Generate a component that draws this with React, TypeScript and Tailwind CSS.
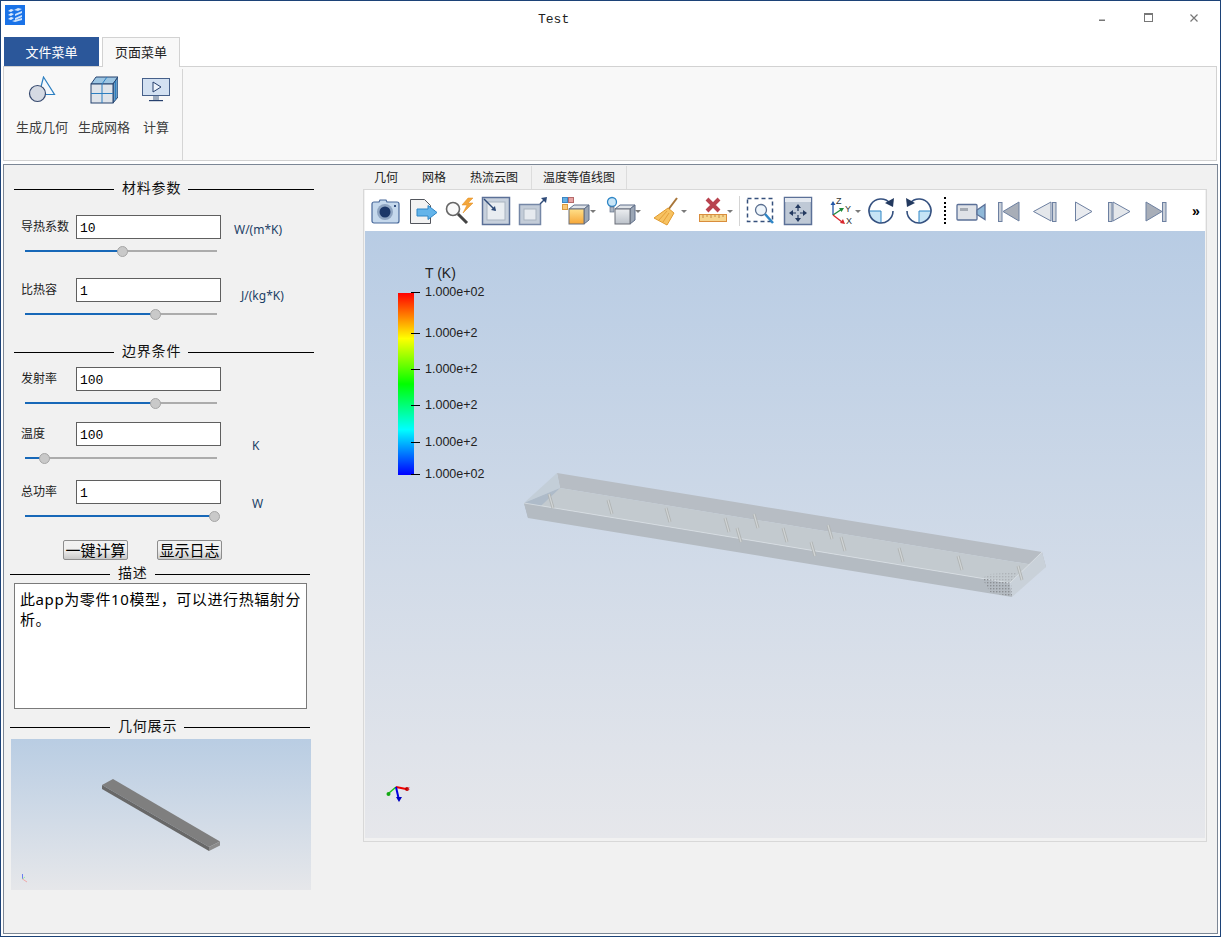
import React from "react";

const stroke = "#5b7097";

const Caret = ({ x = 32 }: { x?: number }) => (
  <polygon points={`${x - 3},14 ${x + 3},14 ${x},17`} fill="#7a7a7a" />
);

const Svg = ({ w, className, children }: { w: number; className?: string; children: React.ReactNode }) => (
  <svg width={w} height={30} viewBox={`0 0 ${w} 30`} className={`shrink-0 ${className ?? ""}`}>
    {children}
  </svg>
);

const CubeFaces = ({ id, from, to }: { id: string; from: string; to: string }) => (
  <>
    <defs>
      <linearGradient id={id} x1="0" y1="0" x2="0" y2="1">
        <stop offset="0" stopColor={from} />
        <stop offset="1" stopColor={to} />
      </linearGradient>
    </defs>
    <polygon points="9,13 14,9 29,9 24,13" fill="#dfe3e8" stroke="#5f6f8a" />
    <polygon points="24,13 29,9 29,24 24,28" fill="#9ba6b5" stroke="#5f6f8a" />
    <rect x="9" y="13" width="15" height="15" fill={`url(#${id})`} stroke="#6b6f78" />
  </>
);

const toolbarItems: React.ReactNode[] = [
  <Svg key="camera" w={30} className="ml-[6px]">
    <path d="M5 6h3l1-2h6l1 2h10a2 2 0 0 1 2 2v17a2 2 0 0 1-2 2H3a2 2 0 0 1-2-2V8a2 2 0 0 1 2-2z" fill="#c5d8ec" stroke="#48689a" strokeWidth="1.2" />
    <circle cx="14" cy="16" r="8" fill="#8fa5c2" />
    <circle cx="14" cy="16" r="5.5" fill="#1c3768" />
    <rect x="23" y="9" width="2" height="2" fill="#34507f" />
  </Svg>,
  <Svg key="save" w={30} className="ml-[8px]">
    <path d="M1.5 3.5h14l6 6v18h-20z" fill="#f2f2f2" stroke="#52555c" />
    <path d="M8 13h11V9.5l9 7-9 7V20H8z" fill="#63b4ea" stroke="#2f86c6" />
  </Svg>,
  <Svg key="search" w={30} className="ml-[6px]">
    <circle cx="8" cy="13" r="6.5" fill="#fafafa" stroke="#666" strokeWidth="1.6" />
    <line x1="13" y1="18" x2="22" y2="27" stroke="#444" strokeWidth="3" />
    <polygon points="23,2 17,9 22,9 18,17 28,7 23,7 28,2" fill="#f3a63b" stroke="#e08a1e" strokeWidth="0.5" />
  </Svg>,
  <Svg key="zoomin" w={30} className="ml-[6px]">
    <rect x="1.5" y="1.5" width="27" height="27" fill="#c7d0dc" stroke={stroke} strokeWidth="1.5" />
    <rect x="6" y="6" width="18" height="18" fill="#e9edf1" stroke="#a9b3c0" />
    <line x1="3" y1="3" x2="14" y2="14" stroke="#2e4a78" strokeWidth="1.4" />
    <polygon points="15,15 10,14 14,10" fill="#2e4a78" />
  </Svg>,
  <Svg key="zoomout" w={30} className="ml-[7px]">
    <rect x="1.5" y="8.5" width="21" height="20" fill="#c3ccd8" stroke="#7587a6" strokeWidth="1.5" />
    <rect x="6" y="13" width="12" height="11" fill="#e6eaef" stroke="#a9b3c0" />
    <line x1="22" y1="8" x2="27" y2="3" stroke="#2e4a78" strokeWidth="1.4" />
    <polygon points="29,1 23,2 28,7" fill="#2e4a78" />
  </Svg>,
  <Svg key="cube" w={38} className="ml-[12px]">
    <rect x="2.5" y="1.5" width="5" height="5" fill="#62aee5" stroke="#3d86c2" />
    <rect x="8.5" y="1.5" width="5" height="5" fill="#e7a3a3" stroke="#b56a6a" />
    <rect x="2.5" y="8.5" width="5" height="5" fill="#f8c778" stroke="#d8993e" />
    <CubeFaces id="cube-front" from="#ffe08a" to="#f6a637" />
    <Caret x={33} />
  </Svg>,
  <Svg key="bulb" w={38} className="ml-[8px]">
    <circle cx="6" cy="6" r="4.5" fill="#c9e6f8" stroke="#2f86c6" strokeWidth="1.3" />
    <rect x="4" y="11" width="4" height="5" fill="#a9b3c0" stroke="#66738a" strokeWidth="0.7" />
    <CubeFaces id="bulb-front" from="#eceef1" to="#bcc2ca" />
    <Caret />
  </Svg>,
  <Svg key="broom" w={38} className="ml-[8px]">
    <line x1="25" y1="2" x2="16" y2="14" stroke="#a8763a" strokeWidth="2" />
    <polygon points="16,12 2,22 15,29 22,17" fill="#f7c261" stroke="#e09a2f" />
    <path d="M7 24l8-9M11 26l6-9" stroke="#dd9530" strokeWidth="0.8" />
    <Caret />
  </Svg>,
  <Svg key="ruler" w={38} className="ml-[8px]">
    <path d="M9 3l12 12M21 3L9 15" stroke="#b8434f" strokeWidth="4" />
    <rect x="1.5" y="18.5" width="27" height="7" fill="#f6d68e" stroke="#d98d3c" />
    <path d="M5 19v3M9 19v2M13 19v3M17 19v2M21 19v3M25 19v2" stroke="#b97a35" strokeWidth="0.8" />
    <Caret />
  </Svg>,
  <div key="sep" className="ml-[3px] w-px h-[30px] bg-[#d4d4d4] shrink-0" />,
  <Svg key="dash" w={30} className="ml-[6px]">
    <rect x="1.5" y="2.5" width="25" height="23" fill="none" stroke="#36507c" strokeWidth="1.5" strokeDasharray="4 3" />
    <circle cx="15" cy="14" r="5.5" fill="#eef5fb" stroke="#5a6f90" strokeWidth="1.3" />
    <line x1="19" y1="18" x2="27" y2="27" stroke="#2f86c6" strokeWidth="2.5" />
  </Svg>,
  <Svg key="fit" w={30} className="ml-[7px]">
    <rect x="1.5" y="1.5" width="27" height="27" fill="#bfc9d6" stroke={stroke} strokeWidth="1.5" />
    <rect x="2" y="2" width="26" height="4" fill="#e3e8ef" />
    <path d="M15 12v3M15 19v3M10 17h3M17 17h3" stroke="#23395f" strokeWidth="1.2" />
    <polygon points="15,8 12,12 18,12" fill="#23395f" />
    <polygon points="15,26 12,22 18,22" fill="#23395f" />
    <polygon points="6,17 10,14 10,20" fill="#23395f" />
    <polygon points="24,17 20,14 20,20" fill="#23395f" />
  </Svg>,
  <Svg key="axes" w={34} className="ml-[16px]">
    <line x1="4" y1="19" x2="4" y2="8" stroke="#2457a8" strokeWidth="1.3" />
    <polygon points="4,5 1.5,9 6.5,9" fill="#2457a8" />
    <line x1="4" y1="19" x2="13" y2="13" stroke="#1d8a3a" strokeWidth="1.3" />
    <polygon points="15,12 10,12 12.5,16" fill="#1d8a3a" />
    <line x1="4" y1="19" x2="13" y2="26" stroke="#d8262c" strokeWidth="1.3" />
    <polygon points="16,28 11,27 14,23" fill="#d8262c" />
    <text x="7" y="8" fontSize="9" fill="#333" fontFamily="Liberation Sans">Z</text>
    <text x="16" y="16" fontSize="9" fill="#333" fontFamily="Liberation Sans">Y</text>
    <text x="17" y="28" fontSize="9" fill="#333" fontFamily="Liberation Sans">X</text>
    <Caret x={29} />
  </Svg>,
  <Svg key="cw" w={30} className="ml-[3px]">
    <path d="M3 15h12v12a12 12 0 0 1-12-12z" fill="#c6e4f6" />
    <path d="M3 15h12v12" fill="none" stroke="#2f86c6" />
    <path d="M24 7A12 12 0 1 0 27 15" fill="none" stroke="#34507f" strokeWidth="1.6" />
    <polygon points="28,2 27,11 19,7" fill="#23395f" />
  </Svg>,
  <Svg key="ccw" w={30} className="ml-[8px]">
    <path d="M27 15H15v12a12 12 0 0 0 12-12z" fill="#c6e4f6" />
    <path d="M27 15H15v12" fill="none" stroke="#2f86c6" />
    <path d="M6 7A12 12 0 1 1 3 15" fill="none" stroke="#34507f" strokeWidth="1.6" />
    <polygon points="2,2 3,11 11,7" fill="#23395f" />
  </Svg>,
  <div key="dots" className="ml-[10px] h-[27px] border-l-2 border-dotted border-black shrink-0 w-[2px]" />,
  <Svg key="video" w={32} className="ml-[9px]">
    <rect x="2" y="8.5" width="20" height="15.5" rx="1" fill="#dfe2e7" stroke={stroke} strokeWidth="1.3" />
    <rect x="5" y="12" width="8" height="3" fill="#a4aab3" />
    <polygon points="22,14 30,8.5 30,23.5 22,18.5" fill="#8fb8d8" stroke={stroke} strokeWidth="1.3" />
  </Svg>,
  <Svg key="first" w={24} className="ml-[9px]">
    <rect x="2.5" y="6.5" width="3.5" height="19" fill="#c8ced7" stroke="#6d80a1" />
    <polygon points="7,15.5 23,6 23,25" fill="#a8aeb8" stroke="#6d80a1" />
  </Svg>,
  <Svg key="prev" w={26} className="ml-[12px]">
    <polygon points="1.5,15.5 19,6 19,25" fill="#e4e7eb" stroke="#6d80a1" />
    <rect x="20.5" y="6.5" width="3.5" height="19" fill="#d0d5dc" stroke="#6d80a1" />
  </Svg>,
  <Svg key="play" w={20} className="ml-[15px]">
    <polygon points="2.5,6 19,15.5 2.5,25" fill="#e9ebef" stroke="#6d80a1" />
  </Svg>,
  <Svg key="next" w={26} className="ml-[13px]">
    <rect x="2.5" y="6.5" width="3.5" height="19" fill="#d0d5dc" stroke="#6d80a1" />
    <polygon points="7,6 24,15.5 7,25" fill="#e4e7eb" stroke="#6d80a1" />
  </Svg>,
  <Svg key="last" w={24} className="ml-[12px]">
    <polygon points="2,6 18,15.5 2,25" fill="#a8aeb8" stroke="#6d80a1" />
    <rect x="18.5" y="6.5" width="3.5" height="19" fill="#c8ced7" stroke="#6d80a1" />
  </Svg>,
  <span key="more" className="ml-[24px] text-[14px] leading-none font-bold text-black font-['Liberation_Sans',sans-serif]">»</span>,
];

const SectionTitle = ({ title, className }: { title: string; className: string }) => (
  <div className={`flex items-center h-4 w-[300px] ${className}`}>
    <div className="w-[100px] h-px bg-black" />
    <span className="pl-2 pr-[7px] mb-[3px] text-[14px] leading-[15px] tracking-[0.8px] text-[#111]">{title}</span>
    <div className="flex-1 h-px bg-black" />
  </div>
);

const Slider = ({ value }: { value: number }) => (
  <div className="ml-[21px] mt-[5px] w-[192px] h-[14px] flex items-center">
    <div className="h-[2px] bg-[#1768b8]" style={{ width: value }} />
    <div className="relative shrink-0 w-[11px] h-[11px] -mx-[5px] rounded-full bg-[#c9c9c9] border border-[#a6a6a6]" />
    <div className="flex-1 h-[2px] bg-[#acacac]" />
  </div>
);

type ParamProps = {
  label: string;
  value: string;
  slider: number;
  unit?: string;
  unitClass?: string;
  className: string;
};

const Param = ({ label, value, slider, unit, unitClass, className }: ParamProps) => (
  <div className={className}>
    <div className="flex h-6 ml-[17px]">
      <span className="w-[55px] text-[12px] leading-6 text-[#222]">{label}</span>
      <input
        readOnly
        value={value}
        className="w-[145px] h-6 pl-[3px] pt-0.5 bg-white border border-[#5f5f5f] text-[13px] text-black font-['Liberation_Mono',monospace] outline-none"
      />
      {unit && <span className={`text-[12px] leading-4 text-[#1c3f66] ${unitClass}`}>{unit}</span>}
    </div>
    <Slider value={slider} />
  </div>
);

const Button = ({ label, className }: { label: string; className?: string }) => (
  <button className={`w-[65px] h-5 border border-[#8d8d8d] rounded-[2px] bg-linear-to-b from-[#f2f2f2] via-[#efefef] to-[#c9c9c9] text-[15px] leading-[18px] text-black ${className ?? ""}`}>
    {label}
  </button>
);

const LeftPanel = () => (
  <div className="w-[359px] shrink-0 pt-4">
    <SectionTitle title="材料参数" className="ml-[10px]" />
    <Param className="mt-[18px]" label="导热系数" value="10" slider={97} unit="W/(m*K)" unitClass="ml-[13px] mt-[7px]" />
    <Param className="mt-5" label="比热容" value="1" slider={130} unit="J/(kg*K)" unitClass="ml-5 mt-[10px]" />
    <SectionTitle title="边界条件" className="ml-[10px] mt-[23px]" />
    <Param className="mt-[7px]" label="发射率" value="100" slider={130} />
    <Param className="mt-3" label="温度" value="100" slider={19} unit="K" unitClass="ml-[31px] mt-4" />
    <Param className="mt-[15px]" label="总功率" value="1" slider={189} unit="W" unitClass="ml-[31px] mt-4" />
    <div className="flex ml-[59px] mt-[17px] gap-[29px]">
      <Button label="一键计算" />
      <Button label="显示日志" />
    </div>
    <SectionTitle title="描述" className="ml-1.5 mt-1.5" />
    <div className="ml-2.5 mt-px w-[293px] h-[126px] bg-white border border-[#7a7a7a] pl-[5px] pr-1 pt-[5px] text-[15px] leading-[20px] tracking-[0.6px] text-black">
      此app为零件10模型，可以进行热辐射分析。
    </div>
    <SectionTitle title="几何展示" className="ml-1.5 mt-2.5" />
    <div className="ml-[7px] mt-1 w-[300px] h-[151px] bg-linear-to-b from-[#b9cde3] to-[#e6e7ea]">
      <svg viewBox="11 739 300 151" className="block w-full h-full">
        <polygon points="113,779 102,785 209,847 220,841.5" fill="#7f7f7f" />
        <polygon points="102,785 209,847 209,851 102,789" fill="#686868" />
        <polygon points="209,847 220,841.5 220,845.5 209,851" fill="#8c8c8c" />
        <line x1="22.5" y1="874" x2="22.5" y2="879" stroke="#6a7ff0" />
        <line x1="22.5" y1="879" x2="25" y2="877" stroke="#9ee8a8" />
        <line x1="22.5" y1="879" x2="27" y2="882" stroke="#f0a8a8" />
      </svg>
    </div>
  </div>
);

const ticks = [
  { label: "1.000e+02", top: "top-[53px]" },
  { label: "1.000e+2", top: "top-[94px]" },
  { label: "1.000e+2", top: "top-[130px]" },
  { label: "1.000e+2", top: "top-[166px]" },
  { label: "1.000e+2", top: "top-[203px]" },
  { label: "1.000e+02", top: "top-[235px]" },
];

const pins = [
  [551, 501], [610, 507], [668, 515], [727, 525], [739, 535], [756, 521], [785, 535],
  [813, 549], [830, 532], [843, 544], [901, 555], [960, 563], [1020, 573],
];

const Viewer = () => (
  <div className="relative h-[607px] bg-linear-to-b from-[#b8cce4] to-[#e6e7eb] font-['Liberation_Sans',sans-serif]">
    <svg viewBox="365 231 840 607" className="absolute inset-0 w-full h-full">
      <defs>
        <pattern id="hatch" width="3" height="3" patternUnits="userSpaceOnUse">
          <rect width="1.4" height="1.4" fill="#8b8f94" />
        </pattern>
      </defs>
      <polygon points="557,473 1042,552 1046,567 560,488" fill="#b7bdc4" />
      <polygon points="560,488 1046,567 1010,583 524,503" fill="#c3cacf" />
      <polygon points="557,473 560,488 524,503" fill="#c3ced8" />
      <polygon points="524,503 560,488 528,518" fill="#aebbc9" />
      <polygon points="524,503 1010,583 1012,597 528,518" fill="#b4bbc2" />
      <polygon points="1042,552 1046,567 1012,597 1010,583" fill="#c9d1d9" />
      <line x1="524" y1="503" x2="1010" y2="583" stroke="#e6ebee" strokeOpacity="0.6" />
      <line x1="1010" y1="583" x2="1042" y2="552" stroke="#e6ebee" strokeOpacity="0.6" />
      <polygon points="982,578 1011,583 1012,597 990,592" fill="url(#hatch)" />
      <polygon points="990,574 1018,572 1010,583 982,578" fill="url(#hatch)" opacity="0.4" />
      {pins.map(([x, y]) => (
        <g key={x}>
          <line x1={x - 2} y1={y - 7} x2={x + 2} y2={y + 7} stroke="#b0b4b4" strokeWidth="3" />
          <line x1={x - 2} y1={y - 7} x2={x + 2} y2={y + 7} stroke="#d0d4d5" strokeWidth="1.2" />
        </g>
      ))}
      <line x1="396" y1="787" x2="406" y2="789" stroke="#f00000" strokeWidth="2" />
      <circle cx="407" cy="789" r="2" fill="#c00000" />
      <line x1="396" y1="787" x2="389" y2="793" stroke="#18c818" strokeWidth="1.5" />
      <circle cx="388.5" cy="794" r="2" fill="#14a814" />
      <line x1="396" y1="787" x2="398.5" y2="798" stroke="#0000e0" strokeWidth="2" />
      <polygon points="396,797 402,797 399,802" fill="#0000c0" />
      <text x="407" y="790" fontSize="6" fill="#e04040">x</text>
    </svg>
    <span className="absolute left-[60px] top-[32px] text-[14px] leading-5 text-[#222]">T (K)</span>
    <div className="absolute left-[33px] top-[62px] w-4 h-[182px] bg-[linear-gradient(to_bottom,#ff0000_0%,#ffff00_25%,#00ff00_50%,#00ffff_75%,#0000ff_100%)]" />
    {ticks.map((t) => (
      <div key={t.top} className={`absolute left-[46px] flex items-center h-4 ${t.top}`}>
        <div className="w-[9px] h-px bg-black" />
        <span className="ml-[5px] text-[12.5px] leading-4 text-[#222]">{t.label}</span>
      </div>
    ))}
  </div>
);

const RightPanel = () => (
  <div className="w-[844px] shrink-0 pt-px">
    <div className="flex h-[23px] pl-[11px] text-[12px] leading-[23px] text-[#222]">
      <span>几何</span>
      <span className="ml-6">网格</span>
      <span className="ml-6">热流云图</span>
      <span className="ml-[13px] px-[11px] border-x border-[#dcdcdc]">温度等值线图</span>
    </div>
    <div className="h-[653px] border border-[#d8d8d8] px-px pb-[3px]">
      <div className="flex items-center h-[41px] bg-white">{toolbarItems}</div>
      <Viewer />
    </div>
  </div>
);

const RibbonItem = ({ icon, label, className }: { icon: React.ReactNode; label: string; className: string }) => (
  <div className={`flex flex-col items-center shrink-0 ${className}`}>
    <div className="h-7 flex items-center">{icon}</div>
    <span className="mt-[15px] text-[13px] leading-4 whitespace-nowrap text-[#3d3d3d]">{label}</span>
  </div>
);

export default function App() {
  return (
    <div className="w-[1221px] h-[937px] flex flex-col overflow-hidden bg-white border border-[#1c4277] font-['Noto_Sans','Noto_Sans_CJK_SC',sans-serif]">
      <div className="flex h-9 shrink-0 relative">
        <svg width="20" height="20" viewBox="0 0 20 20" className="mt-1 ml-1 shrink-0">
          <rect width="20" height="20" fill="#1a73e8" />
          <path d="M3 6l3-2 3 1-3 2zM3 10l3-2 3 1-3 2zM3 14l3-2 3 1-3 2z" fill="#dbeafd" />
          <path d="M9 5l4-2 4 1-4 2zM10 9l7-3v2l-7 3zM10 13l7-3v2l-7 3zM7 16l10-3v2l-7 2z" fill="#cfe3fb" />
        </svg>
        <span className="ml-[513px] mt-[11px] text-[13px] leading-4 text-[#222] font-['Liberation_Mono',monospace]">Test</span>
        <svg width="110" height="30" viewBox="0 0 110 30" className="absolute right-[20px] top-[3px]">
          <rect x="9" y="15.5" width="6" height="1.5" fill="#777" />
          <rect x="54.5" y="9.5" width="8" height="8" fill="none" stroke="#777" />
          <rect x="54" y="9" width="9" height="2" fill="#777" />
          <path d="M100.5 10.5l7 7M107.5 10.5l-7 7" stroke="#777" strokeWidth="1.2" />
        </svg>
      </div>
      <div className="flex h-[29px] shrink-0 pl-[3px] text-[13px]">
        <div className="w-[95px] h-[29px] bg-[#2b579a] text-white text-center leading-[30px]">文件菜单</div>
        <div className="relative z-10 ml-[3px] w-[78px] h-[30px] bg-[#f8f8f8] border-x border-t border-[#d2d2d2] text-[#222] text-center leading-[28px]">页面菜单</div>
      </div>
      <div className="ml-0.5 mr-[3px] h-[95px] shrink-0 bg-[#f8f8f8] border border-[#d2d2d2] flex items-stretch">
        <div className="flex pl-3 pt-[7px] w-[179px] mt-0.5 border-r border-[#d5d5d5] gap-[10px]">
          <RibbonItem
            label="生成几何"
            className="w-[52px]"
            icon={
              <svg width="28" height="28" viewBox="0 0 28 28">
                <polygon points="15.5,1 26.5,18.5 11,18.5" fill="#f4f8fc" stroke="#2c7fc1" strokeWidth="1.2" />
                <circle cx="9.5" cy="17.5" r="8" fill="#d5dae3" stroke="#36496e" strokeWidth="1.2" />
              </svg>
            }
          />
          <RibbonItem
            label="生成网格"
            className="w-[52px]"
            icon={
              <svg width="28" height="28" viewBox="0 0 28 28">
                <polygon points="1,8 6,1 28,1 23,8" fill="#9cc5e2" stroke="#25436f" />
                <polygon points="23,8 28,1 28,21 23,27" fill="#6b9cc4" stroke="#25436f" />
                <rect x="1" y="8" width="22" height="19" fill="#dfe4ea" stroke="#25436f" />
                <path d="M12 8v19M1 17.5h22M12 8l5-7M25.5 5v19" stroke="#2c7fc1" fill="none" />
              </svg>
            }
          />
          <RibbonItem
            label="计算"
            className="w-[26px] ml-[3px]"
            icon={
              <svg width="28" height="24" viewBox="0 0 28 24">
                <rect x="0.5" y="0.5" width="27" height="17" fill="#d3e1f2" stroke="#46608a" />
                <polygon points="11,4 19,9 11,14" fill="#eef4fb" stroke="#27406e" />
                <rect x="11" y="18" width="6" height="4" fill="#9eacbf" />
                <rect x="7" y="22" width="14" height="1.2" fill="#27406e" />
              </svg>
            }
          />
        </div>
      </div>
      <div className="ml-0.5 mr-0.5 mt-[3px] h-[770px] shrink-0 flex bg-[#f1f1f1] border border-[#7c8796]">
        <LeftPanel />
        <RightPanel />
      </div>
    </div>
  );
}
